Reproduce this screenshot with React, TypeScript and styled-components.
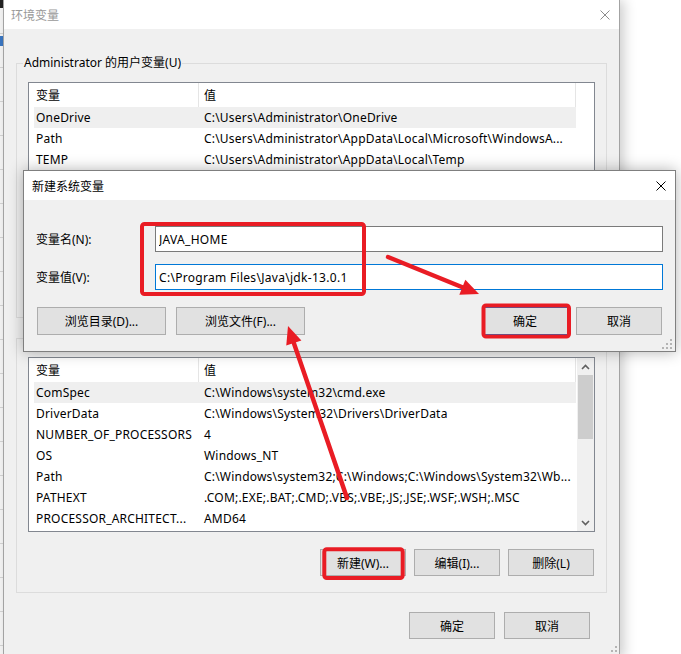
import React from 'react';
import styled, { createGlobalStyle } from 'styled-components';

const FONT = `'Noto Sans', 'Noto Sans CJK SC', sans-serif`;
const RED = '#e91c24';

const GlobalStyle = createGlobalStyle`
    html, body { margin: 0; padding: 0; background: #ffffff; }
    body { font-family: ${FONT}; font-size: 12px; color: #000; }
    * { box-sizing: border-box; }
`;

const Screen = styled.div`
    position: relative;
    width: 681px;
    height: 654px;
    overflow: hidden;
    display: flex;
    align-items: flex-start;
`;

// the window behind, only a sliver of it shows
const BackdropStrip = styled.div`
    flex: none;
    width: 3px;
    height: 654px;
    background:
        linear-gradient(#222 0 8px, transparent 8px 36px, #3b78c4 36px 46px, transparent 46px),
        repeating-linear-gradient(#f7f7f7 0 33px, #d6d6d6 33px 34px);
`;

const MainWindow = styled.div`
    position: relative;
    flex: none;
    width: 617px;
    height: 659px;
    background: #f0f0f0;
    border: 1px solid #a3a3a3;
    border-top: none;
    box-shadow: 4px 0 12px rgba(0, 0, 0, 0.2);
    display: flex;
    flex-direction: column;
`;

const TitleBar = styled.div<{ $active?: boolean }>`
    flex: none;
    height: 29px;
    background: #ffffff;
    display: flex;
    align-items: center;
    justify-content: space-between;
    padding: 0 9px 0 ${(p) => (p.$active ? 8 : 7)}px;
    color: ${(p) => (p.$active ? '#000000' : '#999999')};
    font-size: 12px;
`;

const WindowBody = styled.div`
    flex: 1;
    padding: 26px 12px 0;
    display: flex;
    flex-direction: column;
`;

const GroupBox = styled.fieldset`
    margin: 0;
    padding: 0 11px 16px;
    min-width: 0;
    border: 1px solid #dcdcdc;
    & + & {
        margin-top: 12px;
    }
`;

const GroupLegend = styled.legend`
    padding: 0 1px;
    margin-left: -5px;
    line-height: 16px;
    font-size: 12px;
`;

const ListBox = styled.div`
    margin-top: 11px;
    height: 175px;
    border: 1px solid #828790;
    background: #ffffff;
    display: flex;
`;

const ListView = styled.div`
    flex: 1;
    min-width: 0;
    display: flex;
    flex-direction: column;
    overflow: hidden;
`;

const HeaderRow = styled.div`
    flex: none;
    height: 24px;
    display: grid;
    grid-template-columns: 170px 377px;
`;

const HeaderCell = styled.div<{ $first?: boolean }>`
    display: flex;
    align-items: center;
    padding-left: ${(p) => (p.$first ? 7 : 5)}px;
    border-right: 1px solid #e5e5e5;
`;

const Row = styled.div<{ $selected?: boolean }>`
    flex: none;
    width: 542px;
    height: 21px;
    margin-left: 5px;
    display: grid;
    grid-template-columns: 165px 377px;
    align-items: center;
    white-space: nowrap;
    letter-spacing: 0.2px;
    background: ${(p) => (p.$selected ? '#efefef' : 'transparent')};
`;

const Cell = styled.div<{ $first?: boolean }>`
    overflow: hidden;
    padding-left: ${(p) => (p.$first ? 2 : 5)}px;
`;

const ScrollTrack = styled.div`
    flex: none;
    width: 17px;
    background: #f0f0f0;
    display: flex;
    flex-direction: column;
    align-items: center;
`;

const ScrollArrow = styled.div`
    flex: none;
    width: 17px;
    height: 17px;
    display: flex;
    align-items: center;
    justify-content: center;
`;

const ScrollThumb = styled.div`
    flex: none;
    width: 15px;
    height: 64px;
    background: #cdcdcd;
`;

const ScrollSpace = styled.div`
    flex: 1;
`;

const ButtonRow = styled.div<{ $gap: number; $top: number; $right?: number }>`
    display: flex;
    justify-content: flex-end;
    gap: ${(p) => p.$gap}px;
    margin-top: ${(p) => p.$top}px;
    padding-right: ${(p) => p.$right ?? 0}px;
`;

const Button = styled.button<{ $w: number; $h?: number; $default?: boolean }>`
    flex: none;
    width: ${(p) => p.$w}px;
    height: ${(p) => p.$h ?? 27}px;
    margin: 0;
    padding: 0;
    font-family: ${FONT};
    font-size: 12px;
    color: #000000;
    background: #e1e1e1;
    border: 1px solid ${(p) => (p.$default ? '#0078d7' : '#adadad')};
`;

const Grip = styled.svg<{ $right: number; $bottom: number }>`
    position: absolute;
    right: ${(p) => p.$right}px;
    bottom: ${(p) => p.$bottom}px;
`;

const Dialog = styled.div`
    position: absolute;
    left: 23px;
    top: 170px;
    width: 653px;
    height: 182px;
    background: #f0f0f0;
    border: 1px solid #7f7f7f;
    box-shadow: 0 0 14px rgba(0, 0, 0, 0.3);
    display: flex;
    flex-direction: column;
    z-index: 2;
`;

const DialogBody = styled.div`
    padding: 26px 12px 16px;
    display: flex;
    flex-direction: column;
`;

const FieldGrid = styled.div`
    display: grid;
    grid-template-columns: 119px 508px;
    grid-auto-rows: 26px;
    row-gap: 12px;
    align-items: center;
`;

const TextInput = styled.input<{ $focused?: boolean }>`
    height: 26px;
    width: 100%;
    margin: 0;
    padding: 0 3px;
    font-family: ${FONT};
    font-size: 12px;
    letter-spacing: 0.3px;
    color: #000000;
    background: #ffffff;
    border: 1px solid ${(p) => (p.$focused ? '#0078d7' : '#7a7a7a')};
    outline: none;
`;

const DialogButtons = styled.div`
    margin-top: 17px;
    padding: 0 1px;
    display: flex;
    align-items: center;
`;

const ButtonGroup = styled.div<{ $gap: number }>`
    display: flex;
    gap: ${(p) => p.$gap}px;
`;

const Spacer = styled.div`
    flex: 1;
`;

const Annotations = styled.svg`
    position: absolute;
    left: 0;
    top: 0;
    z-index: 5;
    pointer-events: none;
`;

const userVars: [string, string][] = [
    ['OneDrive', 'C:\\Users\\Administrator\\OneDrive'],
    ['Path', 'C:\\Users\\Administrator\\AppData\\Local\\Microsoft\\WindowsA...'],
    ['TEMP', 'C:\\Users\\Administrator\\AppData\\Local\\Temp']
];

const systemVars: [string, string][] = [
    ['ComSpec', 'C:\\Windows\\system32\\cmd.exe'],
    ['DriverData', 'C:\\Windows\\System32\\Drivers\\DriverData'],
    ['NUMBER_OF_PROCESSORS', '4'],
    ['OS', 'Windows_NT'],
    ['Path', 'C:\\Windows\\system32;C:\\Windows;C:\\Windows\\System32\\Wb...'],
    ['PATHEXT', '.COM;.EXE;.BAT;.CMD;.VBS;.VBE;.JS;.JSE;.WSF;.WSH;.MSC'],
    ['PROCESSOR_ARCHITECT...', 'AMD64']
];

const CloseIcon = ({ color }: { color: string }) => (
    <svg width="10" height="10" viewBox="0 0 10 10">
        <path d="M0.5 0.5L9.5 9.5M9.5 0.5L0.5 9.5" stroke={color} strokeWidth="1" />
    </svg>
);

const Chevron = ({ up }: { up?: boolean }) => (
    <svg width="9" height="6" viewBox="0 0 9 6">
        <path
            d={up ? 'M1 5L4.5 1.5L8 5' : 'M1 1L4.5 4.5L8 1'}
            stroke="#606060"
            strokeWidth="1.6"
            fill="none"
        />
    </svg>
);

const GripDots = ({ right, bottom }: { right: number; bottom: number }) => (
    <Grip $right={right} $bottom={bottom} width="10" height="10" viewBox="0 0 10 10">
        {[
            [8, 0],
            [4, 4],
            [8, 4],
            [0, 8],
            [4, 8],
            [8, 8]
        ].map(([x, y]) => (
            <rect key={`${x}-${y}`} x={x} y={y} width="2" height="2" fill="#b4b4b4" />
        ))}
    </Grip>
);

const VarList = ({ rows, scroll }: { rows: [string, string][]; scroll?: boolean }) => (
    <ListBox>
        <ListView>
            <HeaderRow>
                <HeaderCell $first>变量</HeaderCell>
                <HeaderCell>值</HeaderCell>
            </HeaderRow>
            {rows.map(([name, value], i) => (
                <Row key={name + i} $selected={i === 0}>
                    <Cell $first>{name}</Cell>
                    <Cell>{value}</Cell>
                </Row>
            ))}
        </ListView>
        {scroll && (
            <ScrollTrack>
                <ScrollArrow>
                    <Chevron up />
                </ScrollArrow>
                <ScrollThumb />
                <ScrollSpace />
                <ScrollArrow>
                    <Chevron />
                </ScrollArrow>
            </ScrollTrack>
        )}
    </ListBox>
);

const arrowHead = (x1: number, y1: number, x2: number, y2: number, len = 18, half = 8) => {
    const d = Math.hypot(x2 - x1, y2 - y1);
    const ux = (x2 - x1) / d;
    const uy = (y2 - y1) / d;
    const bx = x2 - ux * len;
    const by = y2 - uy * len;
    return {
        base: [bx + ux * 2, by + uy * 2],
        points: `${x2},${y2} ${bx - uy * half},${by + ux * half} ${bx + uy * half},${by - ux * half}`
    };
};

const Arrow = ({ from, to }: { from: [number, number]; to: [number, number] }) => {
    const head = arrowHead(from[0], from[1], to[0], to[1]);
    return (
        <g>
            <line
                x1={from[0]}
                y1={from[1]}
                x2={head.base[0]}
                y2={head.base[1]}
                stroke={RED}
                strokeWidth="4.5"
                strokeLinecap="round"
            />
            <polygon points={head.points} fill={RED} />
        </g>
    );
};

export default function App() {
    return (
        <Screen>
            <GlobalStyle />
            <BackdropStrip />
            <MainWindow>
                <TitleBar>
                    <span>环境变量</span>
                    <CloseIcon color="#8c8c8c" />
                </TitleBar>
                <WindowBody>
                    <GroupBox>
                        <GroupLegend>Administrator 的用户变量(U)</GroupLegend>
                        <VarList rows={userVars} />
                        <ButtonRow $gap={8} $top={17} $right={1}>
                            <Button $w={86}>新建(N)...</Button>
                            <Button $w={86}>编辑(E)...</Button>
                            <Button $w={86}>删除(D)</Button>
                        </ButtonRow>
                    </GroupBox>
                    <GroupBox>
                        <GroupLegend>系统变量(S)</GroupLegend>
                        <VarList rows={systemVars} scroll />
                        <ButtonRow $gap={8} $top={17} $right={1}>
                            <Button $w={86}>新建(W)...</Button>
                            <Button $w={86}>编辑(I)...</Button>
                            <Button $w={86}>删除(L)</Button>
                        </ButtonRow>
                    </GroupBox>
                    <ButtonRow $gap={9} $top={19} $right={17}>
                        <Button $w={86}>确定</Button>
                        <Button $w={86}>取消</Button>
                    </ButtonRow>
                </WindowBody>
                <GripDots right={2} bottom={2} />
            </MainWindow>

            <Dialog>
                <TitleBar $active>
                    <span>新建系统变量</span>
                    <CloseIcon color="#000000" />
                </TitleBar>
                <DialogBody>
                    <FieldGrid>
                        <span>变量名(N):</span>
                        <TextInput readOnly value="JAVA_HOME" />
                        <span>变量值(V):</span>
                        <TextInput readOnly $focused value="C:\Program Files\Java\jdk-13.0.1" />
                    </FieldGrid>
                    <DialogButtons>
                        <ButtonGroup $gap={10}>
                            <Button $w={129} $h={28}>浏览目录(D)...</Button>
                            <Button $w={129} $h={28}>浏览文件(F)...</Button>
                        </ButtonGroup>
                        <Spacer />
                        <ButtonGroup $gap={8}>
                            <Button $w={86} $h={28} $default>确定</Button>
                            <Button $w={86} $h={28}>取消</Button>
                        </ButtonGroup>
                    </DialogButtons>
                </DialogBody>
                <GripDots right={3} bottom={2} />
            </Dialog>

            <Annotations width="681" height="654" viewBox="0 0 681 654">
                <g fill="none" stroke={RED} strokeWidth="4">
                    <rect x="142" y="224" width="222" height="70" rx="2.5" />
                    <rect x="483.5" y="305.5" width="85.5" height="31" rx="2.5" />
                    <rect x="324.3" y="549.3" width="78.4" height="28.7" rx="2.5" />
                </g>
                <Arrow from={[388, 257]} to={[479, 294]} />
                <Arrow from={[347, 498]} to={[288, 326]} />
            </Annotations>
        </Screen>
    );
}
